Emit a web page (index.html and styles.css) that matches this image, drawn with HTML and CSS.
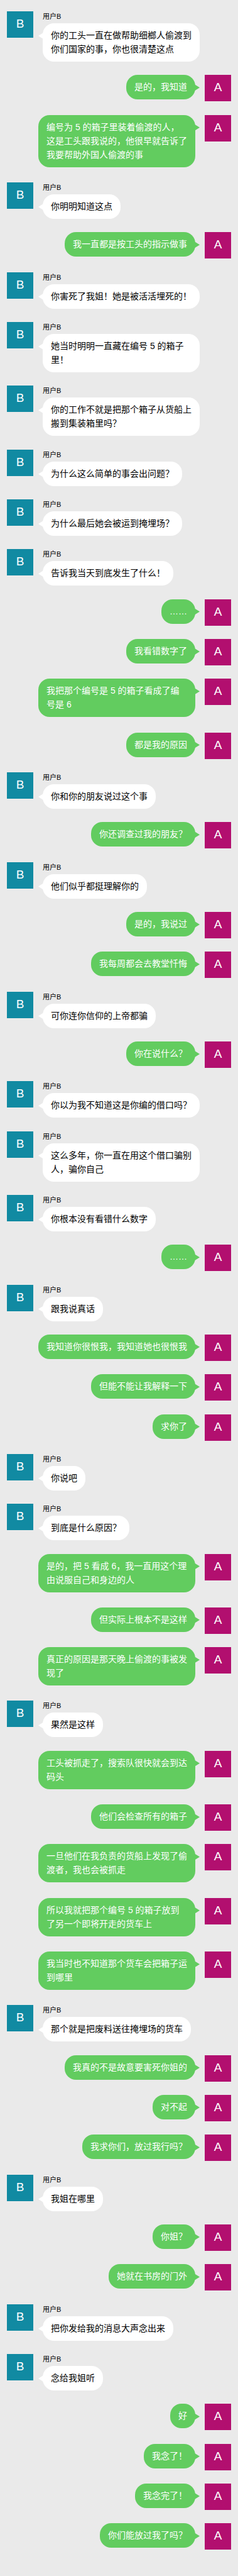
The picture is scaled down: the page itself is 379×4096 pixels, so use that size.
FILE: index.html
```
<!DOCTYPE html>
<html lang="zh-CN">
<head>
<meta charset="utf-8">
<meta name="viewport" content="width=device-width, initial-scale=1">
<title>聊天记录</title>
<link rel="stylesheet" href="styles.css">
</head>
<body>
<main class="chat">
<article class="msg msg-b"><span class="avatar">B</span><div class="body"><span class="name">用户B</span><p class="bubble">你的工头一直在做帮助细榔人偷渡到你们国家的事，你也很清楚这点</p></div></article>
<article class="msg msg-a"><span class="avatar">A</span><div class="body"><p class="bubble">是的，我知道</p></div></article>
<article class="msg msg-a"><span class="avatar">A</span><div class="body"><p class="bubble">编号为 5 的箱子里装着偷渡的人，这是工头跟我说的，他很早就告诉了我要帮助外国人偷渡的事</p></div></article>
<article class="msg msg-b"><span class="avatar">B</span><div class="body"><span class="name">用户B</span><p class="bubble">你明明知道这点</p></div></article>
<article class="msg msg-a"><span class="avatar">A</span><div class="body"><p class="bubble">我一直都是按工头的指示做事</p></div></article>
<article class="msg msg-b"><span class="avatar">B</span><div class="body"><span class="name">用户B</span><p class="bubble">你害死了我姐！她是被活活埋死的！</p></div></article>
<article class="msg msg-b"><span class="avatar">B</span><div class="body"><span class="name">用户B</span><p class="bubble">她当时明明一直藏在编号 5 的箱子里！</p></div></article>
<article class="msg msg-b"><span class="avatar">B</span><div class="body"><span class="name">用户B</span><p class="bubble">你的工作不就是把那个箱子从货船上搬到集装箱里吗？</p></div></article>
<article class="msg msg-b"><span class="avatar">B</span><div class="body"><span class="name">用户B</span><p class="bubble">为什么这么简单的事会出问题？</p></div></article>
<article class="msg msg-b"><span class="avatar">B</span><div class="body"><span class="name">用户B</span><p class="bubble">为什么最后她会被运到掩埋场？</p></div></article>
<article class="msg msg-b"><span class="avatar">B</span><div class="body"><span class="name">用户B</span><p class="bubble">告诉我当天到底发生了什么！</p></div></article>
<article class="msg msg-a"><span class="avatar">A</span><div class="body"><p class="bubble">……</p></div></article>
<article class="msg msg-a"><span class="avatar">A</span><div class="body"><p class="bubble">我看错数字了</p></div></article>
<article class="msg msg-a"><span class="avatar">A</span><div class="body"><p class="bubble">我把那个编号是 5 的箱子看成了编号是 6</p></div></article>
<article class="msg msg-a"><span class="avatar">A</span><div class="body"><p class="bubble">都是我的原因</p></div></article>
<article class="msg msg-b"><span class="avatar">B</span><div class="body"><span class="name">用户B</span><p class="bubble">你和你的朋友说过这个事</p></div></article>
<article class="msg msg-a"><span class="avatar">A</span><div class="body"><p class="bubble">你还调查过我的朋友？</p></div></article>
<article class="msg msg-b"><span class="avatar">B</span><div class="body"><span class="name">用户B</span><p class="bubble">他们似乎都挺理解你的</p></div></article>
<article class="msg msg-a"><span class="avatar">A</span><div class="body"><p class="bubble">是的，我说过</p></div></article>
<article class="msg msg-a"><span class="avatar">A</span><div class="body"><p class="bubble">我每周都会去教堂忏悔</p></div></article>
<article class="msg msg-b"><span class="avatar">B</span><div class="body"><span class="name">用户B</span><p class="bubble">可你连你信仰的上帝都骗</p></div></article>
<article class="msg msg-a"><span class="avatar">A</span><div class="body"><p class="bubble">你在说什么？</p></div></article>
<article class="msg msg-b"><span class="avatar">B</span><div class="body"><span class="name">用户B</span><p class="bubble">你以为我不知道这是你编的借口吗？</p></div></article>
<article class="msg msg-b"><span class="avatar">B</span><div class="body"><span class="name">用户B</span><p class="bubble">这么多年，你一直在用这个借口骗别人，骗你自己</p></div></article>
<article class="msg msg-b"><span class="avatar">B</span><div class="body"><span class="name">用户B</span><p class="bubble">你根本没有看错什么数字</p></div></article>
<article class="msg msg-a"><span class="avatar">A</span><div class="body"><p class="bubble">……</p></div></article>
<article class="msg msg-b"><span class="avatar">B</span><div class="body"><span class="name">用户B</span><p class="bubble">跟我说真话</p></div></article>
<article class="msg msg-a"><span class="avatar">A</span><div class="body"><p class="bubble">我知道你很恨我，我知道她也很恨我</p></div></article>
<article class="msg msg-a"><span class="avatar">A</span><div class="body"><p class="bubble">但能不能让我解释一下</p></div></article>
<article class="msg msg-a"><span class="avatar">A</span><div class="body"><p class="bubble">求你了</p></div></article>
<article class="msg msg-b"><span class="avatar">B</span><div class="body"><span class="name">用户B</span><p class="bubble">你说吧</p></div></article>
<article class="msg msg-b"><span class="avatar">B</span><div class="body"><span class="name">用户B</span><p class="bubble">到底是什么原因？</p></div></article>
<article class="msg msg-a"><span class="avatar">A</span><div class="body"><p class="bubble">是的，把 5 看成 6，我一直用这个理由说服自己和身边的人</p></div></article>
<article class="msg msg-a"><span class="avatar">A</span><div class="body"><p class="bubble">但实际上根本不是这样</p></div></article>
<article class="msg msg-a"><span class="avatar">A</span><div class="body"><p class="bubble">真正的原因是那天晚上偷渡的事被发现了</p></div></article>
<article class="msg msg-b"><span class="avatar">B</span><div class="body"><span class="name">用户B</span><p class="bubble">果然是这样</p></div></article>
<article class="msg msg-a"><span class="avatar">A</span><div class="body"><p class="bubble">工头被抓走了，搜索队很快就会到达码头</p></div></article>
<article class="msg msg-a"><span class="avatar">A</span><div class="body"><p class="bubble">他们会检查所有的箱子</p></div></article>
<article class="msg msg-a"><span class="avatar">A</span><div class="body"><p class="bubble">一旦他们在我负责的货船上发现了偷渡者，我也会被抓走</p></div></article>
<article class="msg msg-a"><span class="avatar">A</span><div class="body"><p class="bubble">所以我就把那个编号 5 的箱子放到了另一个即将开走的货车上</p></div></article>
<article class="msg msg-a"><span class="avatar">A</span><div class="body"><p class="bubble">我当时也不知道那个货车会把箱子运到哪里</p></div></article>
<article class="msg msg-b"><span class="avatar">B</span><div class="body"><span class="name">用户B</span><p class="bubble">那个就是把废料送往掩埋场的货车</p></div></article>
<article class="msg msg-a"><span class="avatar">A</span><div class="body"><p class="bubble">我真的不是故意要害死你姐的</p></div></article>
<article class="msg msg-a"><span class="avatar">A</span><div class="body"><p class="bubble">对不起</p></div></article>
<article class="msg msg-a"><span class="avatar">A</span><div class="body"><p class="bubble">我求你们，放过我行吗？</p></div></article>
<article class="msg msg-b"><span class="avatar">B</span><div class="body"><span class="name">用户B</span><p class="bubble">我姐在哪里</p></div></article>
<article class="msg msg-a"><span class="avatar">A</span><div class="body"><p class="bubble">你姐？</p></div></article>
<article class="msg msg-a"><span class="avatar">A</span><div class="body"><p class="bubble">她就在书房的门外</p></div></article>
<article class="msg msg-b"><span class="avatar">B</span><div class="body"><span class="name">用户B</span><p class="bubble">把你发给我的消息大声念出来</p></div></article>
<article class="msg msg-b"><span class="avatar">B</span><div class="body"><span class="name">用户B</span><p class="bubble">念给我姐听</p></div></article>
<article class="msg msg-a"><span class="avatar">A</span><div class="body"><p class="bubble">好</p></div></article>
<article class="msg msg-a"><span class="avatar">A</span><div class="body"><p class="bubble">我念了！</p></div></article>
<article class="msg msg-a"><span class="avatar">A</span><div class="body"><p class="bubble">我念完了！</p></div></article>
<article class="msg msg-a"><span class="avatar">A</span><div class="body"><p class="bubble">你们能放过我了吗？</p></div></article>
</main>
</body>
</html>
```
FILE: styles.css
```
* {
  box-sizing: border-box;
}

body {
  margin: 0;
  background: #eaeaea;
  color: #000;
  font-family: "Liberation Sans", "Noto Sans CJK SC", sans-serif;
  font-size: 14px;
  line-height: 22px;
}

.chat {
  display: flex;
  flex-direction: column;
  justify-content: space-between;
  gap: 21px;
  min-height: 100vh;
  padding: 18px 11px 41px;
}

.msg {
  display: flex;
  align-items: flex-start;
  gap: 15px;
}

.msg-b {
  padding-right: 50px;
}

.msg-a {
  flex-direction: row-reverse;
  padding-left: 50px;
}

.avatar {
  flex: none;
  width: 42px;
  height: 42px;
  color: #fff;
  font-size: 19px;
  line-height: 40px;
  text-align: center;
}

.msg-b .avatar {
  background: #118aa2;
}

.msg-a .avatar {
  background: #b20f6f;
}

.body {
  display: flex;
  flex-direction: column;
  align-items: flex-start;
  gap: 3px;
  min-width: 0;
}

.msg-a .body {
  padding-bottom: 3px;
}

.name {
  font-size: 11px;
  line-height: 16px;
}

.bubble {
  position: relative;
  margin: 0;
  padding: 8px 13px 9px;
  border-radius: 18px;
}

.msg-b .bubble {
  background: #fff;
}

.msg-a .bubble {
  background: #62cc5f;
  color: #fff;
}

/* Pointer towards the avatar */
.bubble::before {
  content: "";
  position: absolute;
  top: 15px;
  width: 8px;
  height: 10px;
  background: inherit;
}

.msg-b .bubble::before {
  right: 100%;
  margin-right: -1px;
  clip-path: polygon(0 50%, 100% 0, 100% 100%);
}

.msg-a .bubble::before {
  left: 100%;
  margin-left: -1px;
  clip-path: polygon(100% 50%, 0 0, 0 100%);
}
```
